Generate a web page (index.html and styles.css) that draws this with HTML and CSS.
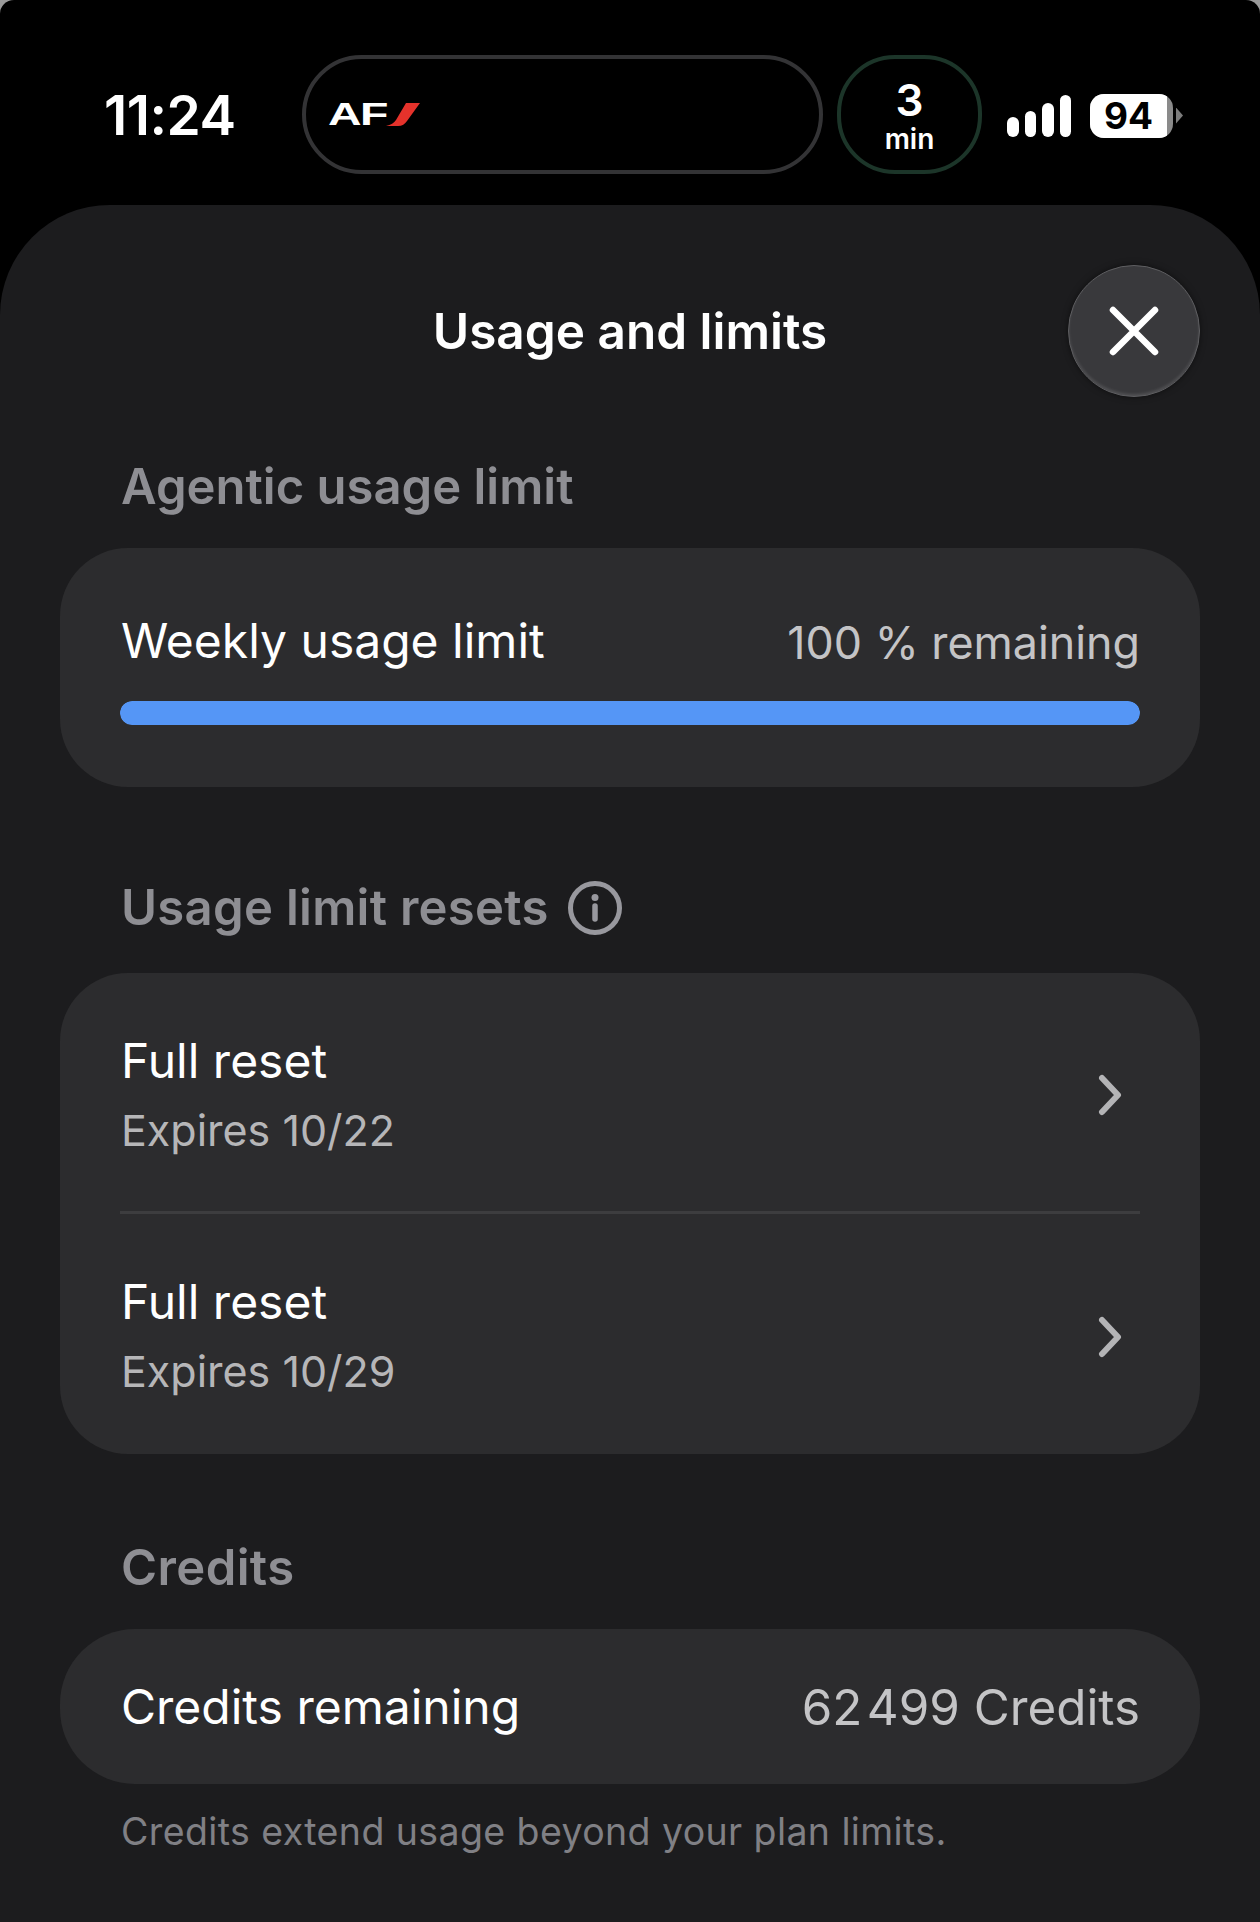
FILE: index.html
```html
<!DOCTYPE html>
<html lang="en">
  <head>
    <meta charset="UTF-8" />
    <meta name="viewport" content="width=device-width, initial-scale=1.0" />
    <title>Usage and limits</title>
    <link rel="stylesheet" href="styles.css">
  </head>

  <body>
    <div class="screen">
      <!-- status bar -->
      <div class="status">
        <div class="time">11:24</div>
        <div class="island">
          <span class="af-logo"><span class="af-text">AF</span><svg class="af-slash" width="34" height="23" viewBox="0 0 34 23"><path d="M20 0H34L21 18C19 21 16 23 12 23H0C5 22 8 20 10 17Z" fill="#e5322b"/></svg></span>
        </div>
        <div class="eta"><span class="eta-num">3</span><span class="eta-unit">min</span></div>
        <div class="signal">
          <span class="signal-bar bar-1"></span>
          <span class="signal-bar bar-2"></span>
          <span class="signal-bar bar-3"></span>
          <span class="signal-bar bar-4"></span>
        </div>
        <div class="battery"><span class="battery-level">94</span><span class="battery-rest"></span></div>
        <div class="battery-nub"></div>
      </div>

      <!-- sheet -->
      <div class="sheet">
        <div class="sheet-header">
          <h1 class="sheet-title">Usage and limits</h1>
          <button class="close-btn">
            <svg width="52" height="52" viewBox="0 0 52 52"><path d="M5 5L47 47M47 5L5 47" stroke="#fff" stroke-width="6.5" stroke-linecap="round"/></svg>
          </button>
        </div>

        <h2 class="section-label">Agentic usage limit</h2>
        <div class="card card-usage">
          <div class="row-between">
            <span class="row-title">Weekly usage limit</span>
            <span class="row-value">100 % remaining</span>
          </div>
          <div class="progress"><div class="progress-fill" style="width: 100%"></div></div>
        </div>

        <h2 class="section-label section-resets">
          Usage limit resets
          <svg class="info-icon" width="56" height="56" viewBox="0 0 56 56">
            <circle cx="28" cy="28" r="24.5" fill="none" stroke="#98989e" stroke-width="5"/>
            <circle cx="28" cy="17.5" r="3.5" fill="#98989e"/>
            <path d="M28 26V39" stroke="#98989e" stroke-width="5.5" stroke-linecap="round"/>
          </svg>
        </h2>
        <div class="card card-resets">
          <div class="reset-row row-first">
            <div class="reset-text">
              <div class="row-title">Full reset</div>
              <div class="reset-sub">Expires 10/22</div>
            </div>
            <svg class="chevron" width="24" height="42" viewBox="0 0 24 42"><path d="M4 4L20 21L4 38" fill="none" stroke="#b4b4b6" stroke-width="6" stroke-linecap="round" stroke-linejoin="round"/></svg>
          </div>
          <div class="reset-row row-second">
            <div class="reset-text">
              <div class="row-title">Full reset</div>
              <div class="reset-sub">Expires 10/29</div>
            </div>
            <svg class="chevron" width="24" height="42" viewBox="0 0 24 42"><path d="M4 4L20 21L4 38" fill="none" stroke="#b4b4b6" stroke-width="6" stroke-linecap="round" stroke-linejoin="round"/></svg>
          </div>
        </div>

        <h2 class="section-label section-credits">Credits</h2>
        <div class="card card-credits">
          <span class="row-title">Credits remaining</span>
          <span class="row-value credits-value">62&#8202;499 Credits</span>
        </div>
        <p class="footnote">Credits extend usage beyond your plan limits.</p>
      </div>
    </div>
  </body>
</html>
```

FILE: styles.css
```css
* {
  box-sizing: border-box;
  font-family: Inter, "Liberation Sans", sans-serif;
}

body {
  margin: 0;
  padding: 0;
  height: 1922px;
  overflow: hidden;
  background-color: #9a9a9a;
}

.screen {
  height: 1922px;
  background-color: black;
  border-radius: 14px 14px 0 0;
  overflow: hidden;
}

/* status bar */
.status {
  height: 205px;
  padding: 55px 0 31px 104px;
  display: flex;
  align-items: center;
  color: white;
}

.time {
  width: 198px;
  font-size: 55px;
  font-weight: 600;
  letter-spacing: -0.5px;
}

.island {
  width: 521px;
  height: 119px;
  border: 4px solid #333335;
  border-radius: 60px;
  display: flex;
  align-items: center;
  padding-left: 22px;
}

.af-logo {
  display: flex;
  align-items: center;
}

.af-text {
  font-family: "Liberation Sans", sans-serif;
  font-size: 31px;
  font-weight: bold;
  letter-spacing: -1px;
  display: inline-block;
  transform: scaleX(1.5);
  transform-origin: left center;
  margin-right: 18px;
}

.af-slash {
  margin-left: 1px;
}

.eta {
  width: 145px;
  height: 119px;
  margin-left: 14px;
  padding-top: 6px;
  border: 4px solid #1c3529;
  border-radius: 58px;
  display: flex;
  flex-direction: column;
  align-items: center;
  justify-content: center;
}

.eta-num {
  font-size: 44px;
  font-weight: 600;
  line-height: 44px;
}

.eta-unit {
  font-size: 28px;
  font-weight: 600;
  line-height: 35px;
}

.signal {
  margin-left: 25px;
  margin-top: 2px;
  height: 42px;
  display: flex;
  align-items: flex-end;
  gap: 6px;
}

.signal-bar {
  width: 11.5px;
  background-color: white;
  border-radius: 6px;
}

.bar-1 { height: 20px; }
.bar-2 { height: 26px; }
.bar-3 { height: 34px; }
.bar-4 { height: 42px; }

.battery {
  margin-left: 19px;
  margin-top: 2px;
  width: 83px;
  height: 44px;
  border-radius: 14px;
  overflow: hidden;
  display: flex;
  background-color: #8a8a8a;
}

.battery-level {
  width: 77px;
  background-color: white;
  color: black;
  font-size: 37px;
  font-weight: 700;
  line-height: 44px;
  text-align: center;
}

.battery-nub {
  margin-left: 3px;
  margin-top: 2px;
  width: 7px;
  height: 16px;
  background-color: #7c7c7c;
  clip-path: polygon(0 0, 100% 50%, 0 100%);
}

/* sheet */
.sheet {
  height: 1717px;
  padding: 60px 60px 0;
  background-color: #1c1c1e;
  border-radius: 110px 110px 0 0;
}

.sheet-header {
  display: grid;
  grid-template-columns: 1fr auto 1fr;
  align-items: center;
  height: 132px;
}

.sheet-title {
  grid-column: 2;
  margin: 0;
  color: white;
  font-size: 49.5px;
  font-weight: 600;
}

.close-btn {
  grid-column: 3;
  justify-self: end;
  width: 132px;
  height: 132px;
  padding: 0;
  border: 1px solid #5e5e61;
  border-radius: 50%;
  background-color: #39393c;
  box-shadow: 0 0 6px rgba(0, 0, 0, 0.5), inset 0 -2px 3px rgba(255, 255, 255, 0.12);
  display: flex;
  align-items: center;
  justify-content: center;
}

.section-label {
  margin: 60px 0 31px;
  padding-left: 61px;
  height: 60px;
  line-height: 60px;
  color: #8e8e93;
  font-size: 49px;
  font-weight: 600;
}

.section-resets {
  margin-top: 91px;
  margin-bottom: 35px;
  display: flex;
  align-items: center;
  gap: 18px;
  letter-spacing: 0.3px;
}

.section-credits {
  margin-top: 84px;
  letter-spacing: 0.4px;
}

.card {
  background-color: #2c2c2e;
  border-radius: 68px;
}

.card-usage {
  padding: 63px 60px 62px;
}

.row-between {
  display: flex;
  justify-content: space-between;
  align-items: center;
  height: 60px;
}

.row-title {
  padding-left: 1px;
  color: white;
  font-size: 48px;
  line-height: 60px;
  font-weight: 400;
}

.row-value {
  margin-top: 3px;
  color: #c4c4c6;
  font-size: 44.8px;
}

.progress {
  margin-top: 30px;
  height: 24px;
  border-radius: 12px;
  background-color: #3a3a3c;
  overflow: hidden;
}

.progress-fill {
  height: 100%;
  background-color: #5596f6;
  border-radius: 12px;
}

.card-resets {
  padding: 0 60px;
}

.reset-row {
  height: 238px;
  padding-right: 18px;
  display: flex;
  justify-content: space-between;
  align-items: center;
}

.row-first .chevron {
  margin-top: 6px;
}

.row-second {
  border-top: 3px solid #3d3d3f;
  height: 243px;
}

.row-second .reset-text {
  margin-top: -1px;
}

.row-second .chevron {
  margin-top: 5px;
}

.reset-sub {
  padding-left: 1px;
  margin-top: 15px;
  color: #b6b6b8;
  font-size: 43px;
  line-height: 48px;
}

.card-credits {
  height: 155px;
  padding: 0 60px;
  display: flex;
  justify-content: space-between;
  align-items: center;
  border-radius: 75px;
}

.credits-value {
  margin-top: 0;
  font-size: 49.3px;
}

.footnote {
  margin: 24px 0 0;
  padding-left: 61px;
  color: #808085;
  font-size: 37.5px;
  line-height: 48px;
  letter-spacing: 0.4px;
}
```
